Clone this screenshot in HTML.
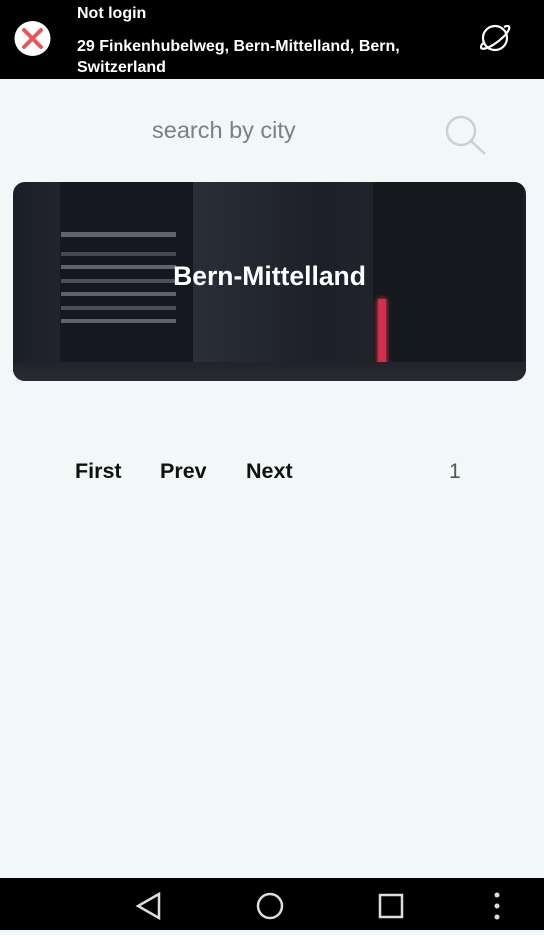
<!DOCTYPE html>
<html><head><meta charset="utf-8"><style>
*{margin:0;padding:0;box-sizing:border-box}
body{width:544px;height:930px;background:#f0f8f8;font-family:"Liberation Sans",sans-serif;position:relative;overflow:hidden}
.top{position:absolute;left:0;top:0;width:544px;height:79px;background:#000;color:#fff}
.t{position:absolute;left:77px;font-weight:bold;font-size:16px}
.card{position:absolute;left:13px;top:182px;width:513px;height:199px;border-radius:12px;overflow:hidden;
background:linear-gradient(90deg,#1a1e26 0%,#23262e 12%,#2a2e38 35%,#1d2028 60%,#22252c 75%,#1b1f27 100%)}
.w{position:absolute;background:#9aa2b0;opacity:.55}
.nav{position:absolute;left:0;top:878px;width:544px;height:52px;background:#000}
.p{position:absolute;top:459px;font-weight:bold;font-size:21.5px;color:#111}
</style></head><body>
<div class="top">
<svg style="position:absolute;left:14px;top:21px" width="37" height="35"><ellipse cx="18.5" cy="17.5" rx="18" ry="17.5" fill="#fff"/><path d="M10 9L27 26M27 9L10 26" stroke="#e8555a" stroke-width="4" stroke-linecap="round"/></svg>
<div class="t" style="top:5px">Not login</div>
<div class="t" style="top:36px;line-height:21px">29 Finkenhubelweg, Bern-Mittelland, Bern,<br>Switzerland</div>
<svg style="position:absolute;left:477px;top:21px" width="36" height="35" fill="none" stroke="#fff" stroke-width="2.2"><circle cx="18" cy="17" r="12"/><path d="M27 6c4-2 6-1 5 2-1 4-8 11-16 16-7 4-12 5-12 2 0-2 2-4 4-5"/></svg>
</div>
<div style="position:absolute;left:152px;top:117px;font-size:23.5px;color:#7d8080">search by city</div>
<svg style="position:absolute;left:441px;top:113px" width="48" height="44" fill="none" stroke="#ccd0d0" stroke-width="2.5"><circle cx="20" cy="18" r="14"/><path d="M30 28L44 41"/></svg>
<div class="card">
<div style="position:absolute;left:47px;top:0;width:133px;height:199px;background:#151820"></div>
<div class="w" style="left:48px;top:50px;width:115px;height:5px"></div>
<div class="w" style="left:48px;top:70px;width:115px;height:4px;opacity:.35"></div>
<div class="w" style="left:48px;top:83px;width:115px;height:4px"></div>
<div class="w" style="left:48px;top:97px;width:115px;height:4px;opacity:.4"></div>
<div class="w" style="left:48px;top:110px;width:115px;height:4px"></div>
<div class="w" style="left:48px;top:124px;width:115px;height:4px;opacity:.4"></div>
<div class="w" style="left:48px;top:137px;width:115px;height:4px"></div>
<div style="position:absolute;left:360px;top:0;width:150px;height:199px;background:#15181d"></div>
<div style="position:absolute;left:365px;top:117px;width:8px;height:82px;background:#d0304a;box-shadow:0 0 6px #f04060"></div>
<div style="position:absolute;left:0;top:180px;width:513px;height:19px;background:linear-gradient(#20232b,#2c2a30)"></div>
<div style="position:absolute;left:0;top:79px;width:513px;text-align:center;color:#fff;font-weight:bold;font-size:26.5px">Bern-Mittelland</div>
</div>
<div class="p" style="left:75px">First</div>
<div class="p" style="left:160px">Prev</div>
<div class="p" style="left:246px">Next</div>
<div style="position:absolute;left:449px;top:460px;font-size:21px;color:#555">1</div>
<div class="nav">
<svg width="544" height="52" fill="none" stroke="#ddd" stroke-width="2.5"><path d="M159 16L138 28L159 40Z"/><circle cx="270" cy="28" r="12"/><rect x="380" y="17" width="22" height="22"/><g fill="#ddd" stroke="none"><circle cx="497" cy="17" r="2.5"/><circle cx="497" cy="28" r="2.5"/><circle cx="497" cy="39" r="2.5"/></g></svg>
</div>
</body></html>
